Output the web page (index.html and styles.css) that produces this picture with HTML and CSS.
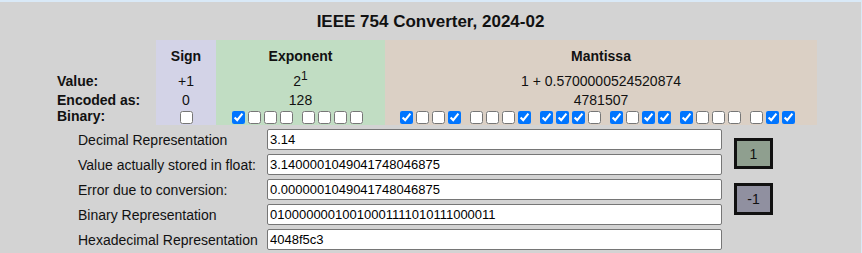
FILE: index.html
```html
<!DOCTYPE html>
<html lang="en">
<head>
    <meta charset="UTF-8">
    <title>IEEE 754 Converter</title>
    <link rel="stylesheet" href="styles.css">
</head>
<body>

    <div class="page">
        <h1 class="title">IEEE 754 Converter, 2024-02</h1>

        <!-- Bit fields -->
        <table class="bits">
            <tr class="head">
                <td class="lbl"></td>
                <th class="sign">Sign</th>
                <th class="exponent">Exponent</th>
                <th class="mantissa">Mantissa</th>
            </tr>
            <tr class="value">
                <td class="lbl">Value:</td>
                <td class="sign">+1</td>
                <td class="exponent">2<sup>1</sup></td>
                <td class="mantissa">1 + 0.5700000524520874</td>
            </tr>
            <tr class="encoded">
                <td class="lbl">Encoded as:</td>
                <td class="sign">0</td>
                <td class="exponent">128</td>
                <td class="mantissa">4781507</td>
            </tr>
            <tr class="binary">
                <td class="lbl">Binary:</td>
                <td class="sign">
                    <div class="boxes"><input type="checkbox"></div>
                </td>
                <td class="exponent">
                    <div class="boxes wide">
                        <span class="grp"><input type="checkbox" checked><input type="checkbox"><input type="checkbox"><input type="checkbox"></span>
                        <span class="grp"><input type="checkbox"><input type="checkbox"><input type="checkbox"><input type="checkbox"></span>
                    </div>
                </td>
                <td class="mantissa">
                    <div class="boxes wide">
                        <span class="grp"><input type="checkbox" checked><input type="checkbox"><input type="checkbox"><input type="checkbox" checked></span>
                        <span class="grp"><input type="checkbox"><input type="checkbox"><input type="checkbox"><input type="checkbox" checked></span>
                        <span class="grp"><input type="checkbox" checked><input type="checkbox" checked><input type="checkbox" checked><input type="checkbox"></span>
                        <span class="grp"><input type="checkbox" checked><input type="checkbox"><input type="checkbox" checked><input type="checkbox" checked></span>
                        <span class="grp"><input type="checkbox" checked><input type="checkbox"><input type="checkbox"><input type="checkbox"></span>
                        <span class="grp"><input type="checkbox"><input type="checkbox" checked><input type="checkbox" checked></span>
                    </div>
                </td>
            </tr>
        </table>

        <!-- Conversion fields -->
        <div class="conv">
            <div class="fields">
                <div class="row">
                    <label>Decimal Representation</label>
                    <input type="text" value="3.14">
                </div>
                <div class="row">
                    <label>Value actually stored in float:</label>
                    <input type="text" value="3.1400001049041748046875">
                </div>
                <div class="row">
                    <label>Error due to conversion:</label>
                    <input type="text" value="0.0000001049041748046875">
                </div>
                <div class="row">
                    <label>Binary Representation</label>
                    <input type="text" value="01000000010010001111010111000011">
                </div>
                <div class="row">
                    <label>Hexadecimal Representation</label>
                    <input type="text" value="4048f5c3">
                </div>
            </div>
            <div class="steps">
                <button class="plus">1</button>
                <button class="minus">-1</button>
            </div>
        </div>
    </div>

</body>
</html>
```

FILE: styles.css
```css
/* Page frame */
html, body {
    margin: 0;
    padding: 0;
    background-color: #d9e9f7;
    font-family: 'Liberation Sans', Arial, sans-serif;
    color: #111;
}
.page {
    margin-top: 2px;
    width: 861px;
    height: 251px;
    background-color: #d3d3d3;
    padding-top: 10px;
    box-sizing: border-box;
}
.title {
    margin: 0 0 8px 0;
    font-size: 17px;
    line-height: 20px;
    text-align: center;
}

/* Bit table */
.bits {
    border-collapse: collapse;
    margin-left: 55px;
    font-size: 14px;
    line-height: 16px;
}
.bits td, .bits th {
    padding: 0;
    text-align: center;
}
.bits .lbl {
    width: 99px;
    text-align: left;
    font-weight: bold;
    padding-left: 2px;
}
.sign {
    width: 60px;
    background-color: #d3d3e7;
}
.exponent {
    width: 169px;
    background-color: #c1ddc3;
}
.mantissa {
    width: 432px;
    background-color: #dbd0c5;
}
.head th {
    padding: 8px 0 4px;
}
.value td {
    height: 21px;
    vertical-align: bottom;
}
.value sup {
    font-size: 12px;
    line-height: 0;
}
.encoded td {
    height: 19px;
    vertical-align: bottom;
}
.binary td {
    height: 17px;
    vertical-align: top;
}
.boxes {
    display: flex;
    justify-content: center;
    gap: 9px;
    padding-top: 3px;
}
.boxes.wide {
    padding-right: 7px;
}
.grp {
    display: flex;
    gap: 3px;
}
.boxes input {
    width: 13px;
    height: 13px;
    margin: 0;
}

/* Conversion fields */
.conv {
    display: flex;
    margin: 4px 0 0 78px;
}
.fields {
    display: flex;
    flex-direction: column;
    gap: 4px;
}
.row {
    display: flex;
    align-items: center;
}
.row label {
    width: 189px;
    font-size: 14px;
}
.row input {
    width: 455px;
    height: 21px;
    box-sizing: border-box;
    margin: 0;
    padding: 1px 2px;
    font-family: 'Liberation Sans', Arial, sans-serif;
    font-size: 13px;
    border: 1px solid #767676;
    border-radius: 2px;
    background-color: white;
}
.steps {
    display: flex;
    flex-direction: column;
    gap: 14px;
    margin: 9px 0 0 12px;
}
.steps button {
    width: 39px;
    height: 31px;
    border: 3px solid #111;
    font-family: 'Liberation Sans', Arial, sans-serif;
    font-size: 14px;
    color: #111;
    padding: 0;
}
.plus {
    background-color: #8f9f8f;
}
.minus {
    background-color: #9090a0;
}
.steps .minus {
    height: 32px;
}
```
